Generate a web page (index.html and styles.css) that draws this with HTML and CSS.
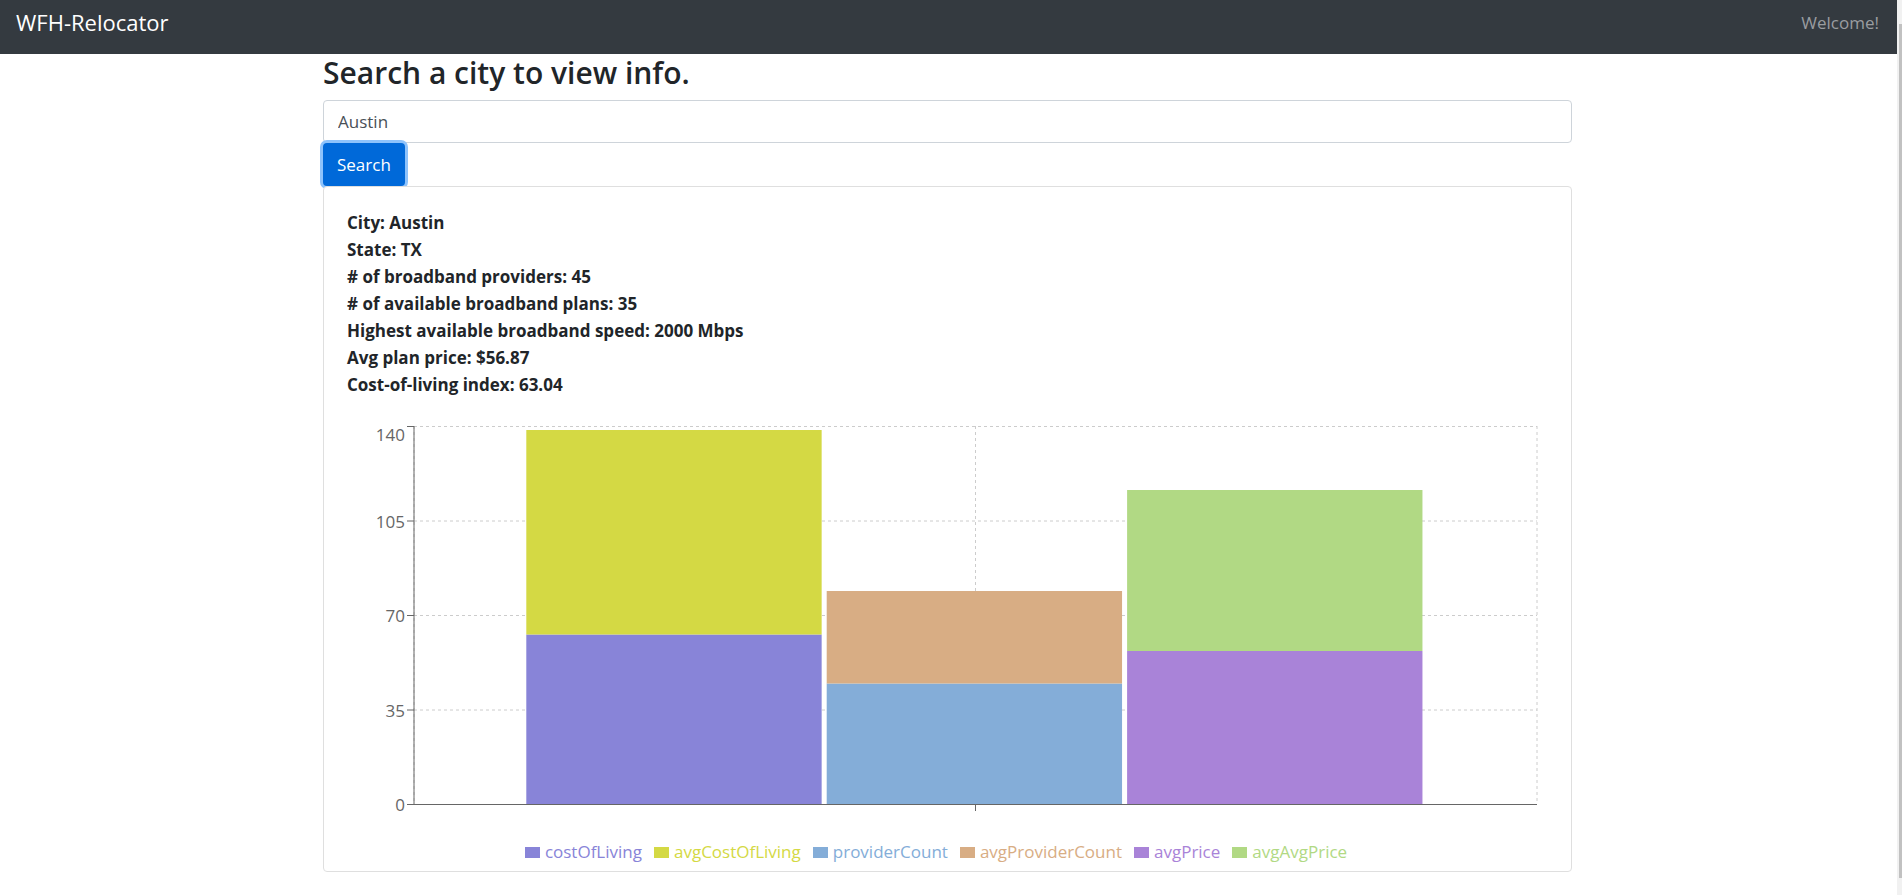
FILE: index.html
```html
<!DOCTYPE html>
<html lang="en">
<head>
<meta charset="utf-8">
<title>WFH-Relocator</title>
<link rel="stylesheet" href="styles.css">
</head>
<body>
<nav class="navbar">
  <a class="brand" href="#">WFH-Relocator</a>
  <span class="welcome">Welcome!</span>
</nav>
<main class="container">
  <form class="search">
    <label class="title" for="city">Search a city to view info.</label>
    <input class="city-input" id="city" type="text" value="Austin">
    <button class="search-button" type="button">Search</button>
  </form>
  <section class="card">
    <ul class="facts">
      <li>City: Austin</li>
      <li>State: TX</li>
      <li># of broadband providers: 45</li>
      <li># of available broadband plans: 35</li>
      <li>Highest available broadband speed: 2000 Mbps</li>
      <li>Avg plan price: $56.87</li>
      <li>Cost-of-living index: 63.04</li>
    </ul>
    <svg class="chart" role="img" aria-label="City figures against averages">
      <g class="grid">
        <line x1="0" y1="0.5" x2="100%" y2="0.5"/>
        <line x1="0" y1="95" x2="100%" y2="95"/>
        <line x1="0" y1="189.5" x2="100%" y2="189.5"/>
        <line x1="0" y1="284" x2="100%" y2="284"/>
        <line x1="0" y1="0" x2="0" y2="378"/>
        <line x1="50%" y1="0" x2="50%" y2="378"/>
        <line x1="100%" y1="0" x2="100%" y2="378"/>
      </g>
      <rect class="cost" x="10%" y="208.5" width="26.3%" height="170"/>
      <rect class="avg-cost" x="10%" y="4" width="26.3%" height="204.5"/>
      <rect class="providers" x="36.75%" y="257.5" width="26.3%" height="121"/>
      <rect class="avg-providers" x="36.75%" y="165" width="26.3%" height="92.5"/>
      <rect class="price" x="63.5%" y="225" width="26.3%" height="153.5"/>
      <rect class="avg-price" x="63.5%" y="64" width="26.3%" height="161"/>
      <g class="axis">
        <line x1="0" y1="0" x2="0" y2="378"/>
        <line x1="0" y1="378.5" x2="100%" y2="378.5"/>
        <line x1="50%" y1="378" x2="50%" y2="385"/>
        <line x1="-7" y1="0.5" x2="0" y2="0.5"/>
        <line x1="-7" y1="95" x2="0" y2="95"/>
        <line x1="-7" y1="189.5" x2="0" y2="189.5"/>
        <line x1="-7" y1="284" x2="0" y2="284"/>
        <line x1="-7" y1="378.5" x2="0" y2="378.5"/>
      </g>
      <g class="ticks">
        <text x="-9" y="15">140</text>
        <text x="-9" y="102">105</text>
        <text x="-9" y="196">70</text>
        <text x="-9" y="291">35</text>
        <text x="-9" y="385">0</text>
      </g>
    </svg>
    <ul class="legend">
      <li class="cost">costOfLiving</li>
      <li class="avg-cost">avgCostOfLiving</li>
      <li class="providers">providerCount</li>
      <li class="avg-providers">avgProviderCount</li>
      <li class="price">avgPrice</li>
      <li class="avg-price">avgAvgPrice</li>
    </ul>
  </section>
</main>
<div class="scroll-track"><div class="scroll-thumb"></div></div>
</body>
</html>
```
FILE: styles.css
```css
* { box-sizing: border-box; }
body {
  margin: 0;
  padding-right: 5px;
  background: #fff;
  color: #212529;
  font: 17px/27px "Open Sans", "Noto Sans", sans-serif;
}
ul { list-style: none; margin: 0; padding: 0; }

.navbar {
  display: flex;
  justify-content: space-between;
  align-items: center;
  height: 54px;
  padding: 0 18px 9px 16px;
  background: #343a40;
}
.brand { color: #fff; font-size: 22px; text-decoration: none; }
.welcome { color: #9a9da0; }

.container { max-width: 1285px; margin: 0 auto; padding: 0 19px 0 17px; }

.search { display: flex; flex-direction: column; align-items: flex-start; }
.title { margin-bottom: 8px; font-size: 30px; font-weight: 600; line-height: 38px; }
.city-input {
  width: 100%;
  height: 43px;
  padding: 0 14px;
  border: 1px solid #ced4da;
  border-radius: 4px;
  background: #fff;
  color: #495057;
  font: inherit;
}
.search-button {
  height: 43px;
  padding: 0 14px;
  border: 0;
  border-radius: 4px;
  background: #0069d9;
  box-shadow: 0 0 0 3px #8ec3fc;
  color: #fff;
  font: inherit;
}

.card {
  position: relative;
  padding: 22px 23px 6px;
  border: 1px solid #dfdfdf;
  border-radius: 4px;
  background: #fff;
}
.facts { font-weight: 700; }

.chart {
  display: block;
  width: calc(100% - 78px);
  height: 386px;
  margin: 28px 11px 0 67px;
  overflow: visible;
}
.grid line { stroke: #ccc; stroke-dasharray: 3 3; }
.axis line { stroke: #666; }
.ticks text { fill: #666; text-anchor: end; }

.cost { color: #8884d8; fill: #8884d8; }
.avg-cost { color: #d4d944; fill: #d4d944; }
.providers { color: #84add8; fill: #84add8; }
.avg-providers { color: #d8ad84; fill: #d8ad84; }
.price { color: #a983d8; fill: #a983d8; }
.avg-price { color: #b1d984; fill: #b1d984; }

.legend {
  display: flex;
  justify-content: center;
  gap: 12px;
  margin-top: 26px;
  padding-right: 23px;
}
.legend li { display: flex; align-items: center; gap: 5px; }
.legend li::before {
  content: "";
  width: 15px;
  height: 11px;
  margin-top: 2px;
  background: currentColor;
}

.scroll-track {
  position: fixed;
  top: 0;
  right: 0;
  bottom: 0;
  width: 5px;
  padding: 24px 0 17px 2px;
  background: #f1f1f1;
}
.scroll-thumb { height: 100%; background: #c1c1c1; }
```
